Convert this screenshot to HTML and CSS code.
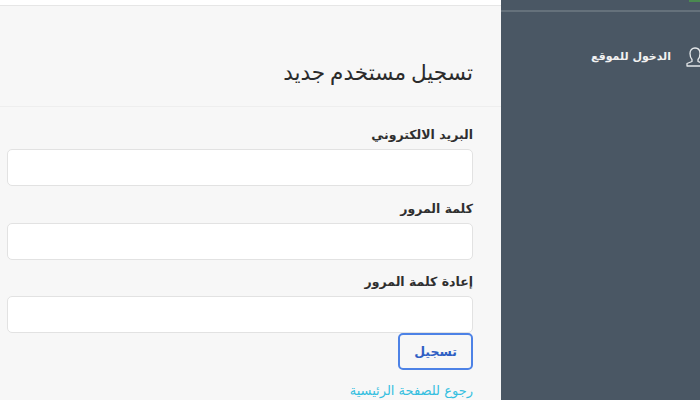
FILE: index.html
```html
<!DOCTYPE html>
<html lang="ar" dir="rtl">
<head>
<meta charset="utf-8">
<title>تسجيل مستخدم جديد</title>
<link rel="stylesheet" href="styles.css">
</head>
<body>
<div class="shell">
  <main class="main">
    <div class="topbar"></div>
    <h1 class="title">تسجيل مستخدم جديد</h1>
    <form class="form">
      <div class="field"><label class="label">البريد الالكتروني</label><input class="input" type="email"></div>
      <div class="field"><label class="label">كلمة المرور</label><input class="input" type="password"></div>
      <div class="field"><label class="label">إعادة كلمة المرور</label><input class="input" type="password"></div>
      <button class="btn" type="button">تسجيل</button>
      <a class="back" href="#">رجوع للصفحة الرئيسية</a>
    </form>
  </main>
  <aside class="side">
    <div class="side-top"><span class="leaf"></span></div>
    <a class="nav" href="#">
      <svg class="nav-icon" width="18" height="20" viewBox="0 0 18 20" fill="none" stroke="#e4e7e9" stroke-width="1.300" stroke-linejoin="round"><path d="M6 12.500C4.700 11 4 9 4 6.500 4 3 6 1 9 1s5 2 5 5.500c0 2.500-.7 4.500-2 6v2l5 2V19H1v-2.500l5-2z"/></svg>
      <span class="nav-text">الدخول للموقع</span>
    </a>
  </aside>
</div>
</body>
</html>
```
FILE: styles.css
```css
* { box-sizing: border-box; }
html, body { margin: 0; height: 400px; overflow: hidden; }
body { font-family: "DejaVu Sans", sans-serif; direction: ltr; }
.shell { display: flex; width: 700px; height: 400px; overflow: hidden; }
.main { width: 501px; flex: none; background: #f7f7f7; direction: rtl; }
.topbar { height: 6px; background: #fff; border-bottom: 1px solid #e6e6e6; }
.title { margin: 0; padding: 47px 28px 12px 0; height: 101px; font-size: 21.600px; word-spacing: -2px; font-weight: 400; line-height: 40px; color: #2b2b2b; border-bottom: 1px solid #eeeeee; }
.form { padding: 15px 28px 0 0; display: flex; flex-direction: column; }
.field { display: flex; flex-direction: column; height: 73.500px; }
.label { font-size: 12.500px; font-weight: 700; line-height: 27px; height: 27px; margin-top: -1px; margin-bottom: 1px; color: #2f2f2f; }
.input { width: 466px; height: 37px; background: #fff; border: 1px solid #e2e2e2; border-radius: 5px; }
.btn { align-self: flex-start; width: 75px; height: 37px; margin-top: -10px; font-family: inherit; font-size: 12.500px; font-weight: 700; color: #2f5fc4; background: transparent; border: 2px solid #4d82e6; border-radius: 5px; padding: 0; }
.back { margin-top: 9px; font-size: 13px; line-height: 24px; color: #35bfe0; text-decoration: none; }
.side { width: 199px; flex: none; background: #4a5764; overflow: hidden; direction: rtl; }
.side-top { height: 12px; border-bottom: 2px solid #65717b; position: relative; }
.leaf { position: absolute; left: 188px; top: 0; width: 11px; height: 2px; background: #4a8a50; }
.nav { display: flex; align-items: center; gap: 15px; margin-top: 35px; margin-right: -4px; color: #f2f2f2; font-size: 11px; font-weight: 700; text-decoration: none; }
.nav-icon { flex: none; }
.nav-text { margin-bottom: 2px; }
```
